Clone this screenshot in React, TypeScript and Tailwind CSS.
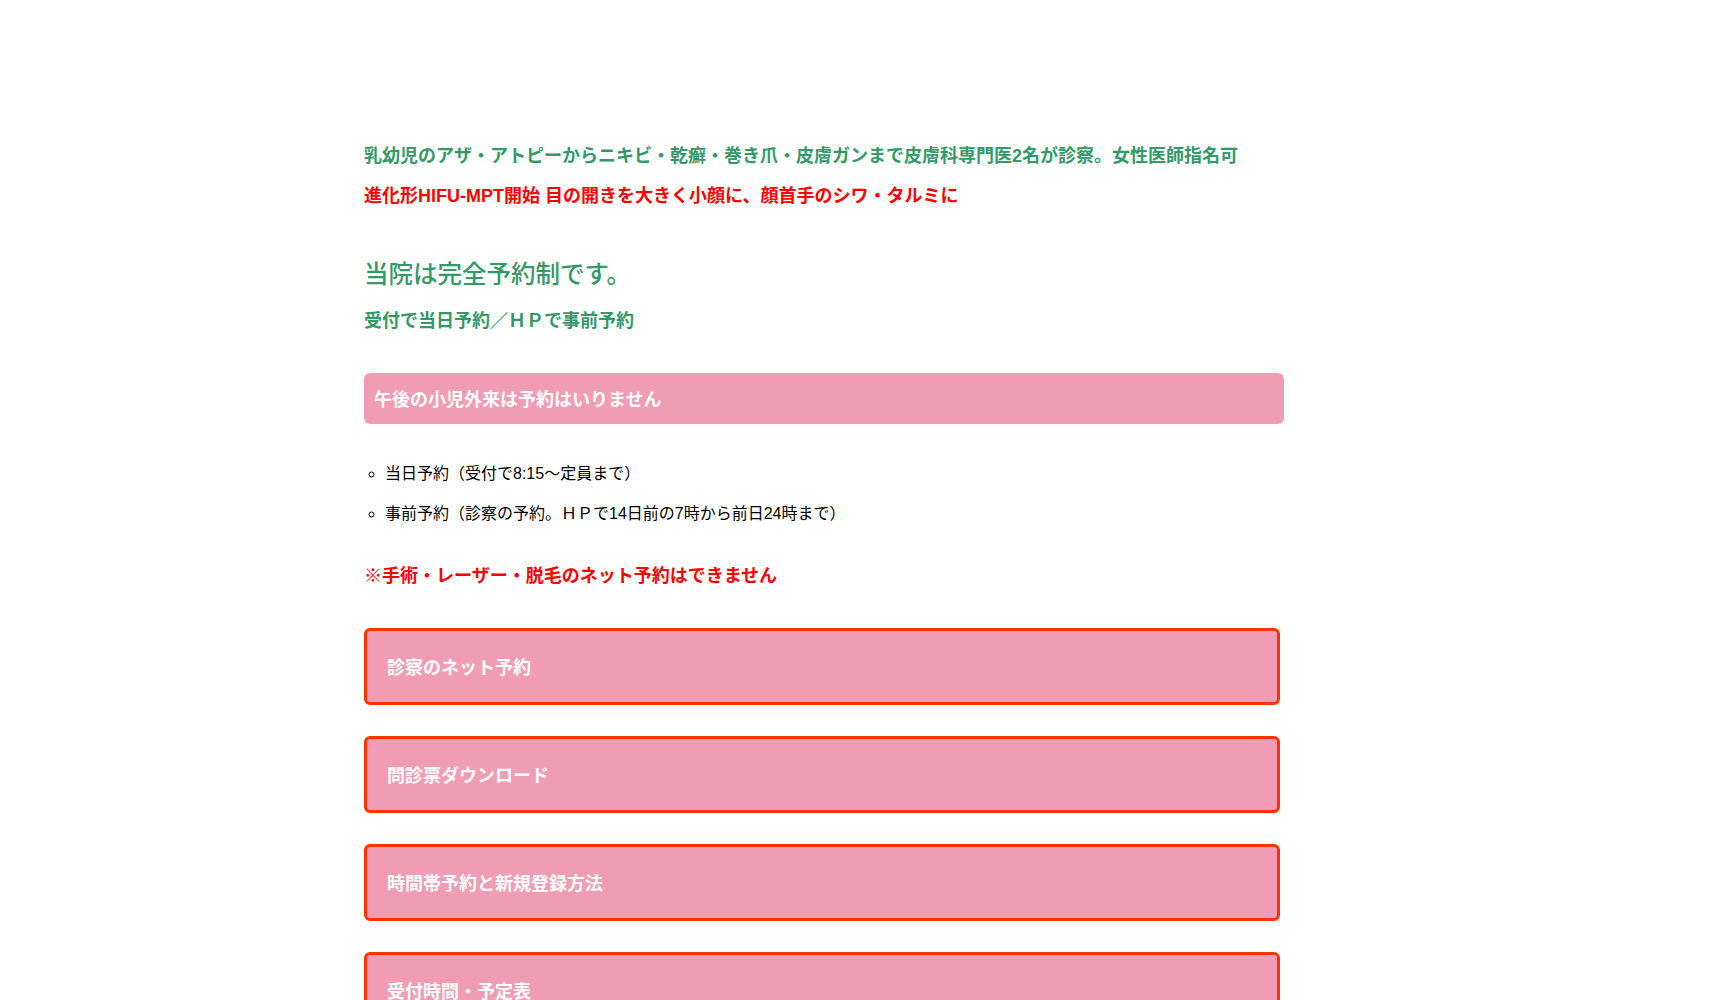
import React from "react";

const font = { fontFamily: '"Liberation Sans", "Noto Sans CJK JP", sans-serif' };

export default function App() {
  const boxes = ["診察のネット予約", "問診票ダウンロード", "時間帯予約と新規登録方法", "受付時間・予定表"];
  return (
    <div className="min-h-screen bg-white pt-[136px] pl-[364px]" style={font}>
      <div className="w-[920px]">
        <p className="text-[18px] leading-[40px] font-bold text-[#339966]">
          乳幼児のアザ・アトピーからニキビ・乾癬・巻き爪・皮膚ガンまで皮膚科専門医2名が診察。女性医師指名可
        </p>
        <p className="text-[18px] leading-[40px] font-bold text-[#ff0000]">
          進化形HIFU-MPT開始 目の開きを大きく小顔に、顔首手のシワ・タルミに
        </p>
        <h2 className="mt-[41px] text-[24.5px] leading-[36px] font-medium text-[#339966]">当院は完全予約制です。</h2>
        <p className="mt-[13px] text-[18px] leading-[30px] font-bold text-[#339966]">受付で当日予約／ＨＰで事前予約</p>
        <div className="mt-[37px] flex h-[51px] items-center rounded-[6px] bg-[#f09cb4] px-[10px] pt-[4px] text-[18px] font-bold text-white">
          午後の小児外来は予約はいりません
        </div>
        <ul className="mt-[30px] list-[circle] pl-[21px] text-[16px] leading-[40px] text-black">
          <li>当日予約（受付で8:15～定員まで）</li>
          <li>事前予約（診察の予約。ＨＰで14日前の7時から前日24時まで）</li>
        </ul>
        <p className="mt-[27px] text-[18px] leading-[30px] font-bold text-[#ff0000]">
          ※手術・レーザー・脱毛のネット予約はできません
        </p>
        <div className="mt-[37px] flex w-[916px] flex-col gap-[31px]">
          {boxes.map((b) => (
            <div
              key={b}
              className="box-border flex h-[77px] items-center rounded-[6px] border-[3px] border-[#ff3300] bg-[#f09cb4] px-[20px] pt-[4px] text-[18px] font-bold text-white"
            >
              {b}
            </div>
          ))}
        </div>
      </div>
    </div>
  );
}
